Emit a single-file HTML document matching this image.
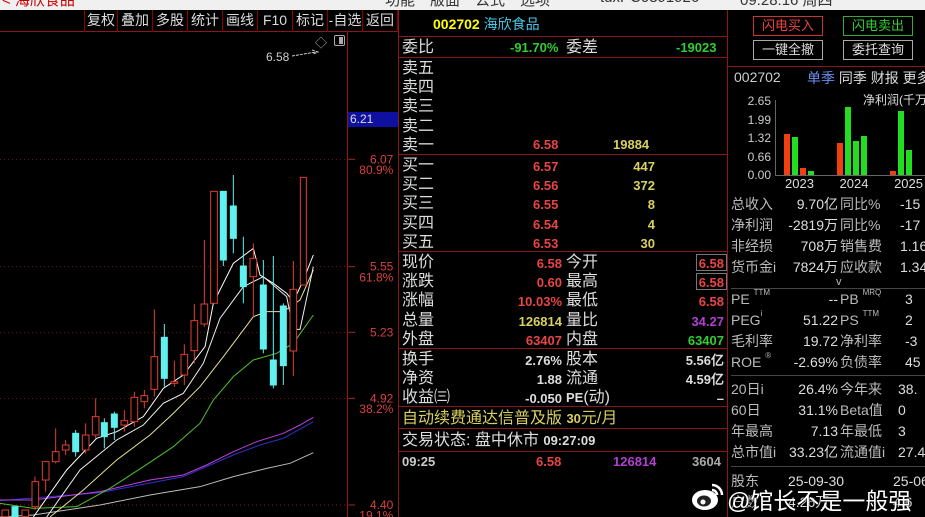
<!DOCTYPE html>
<html><head><meta charset="utf-8"><style>
*{margin:0;padding:0;box-sizing:border-box}
body{width:925px;height:517px;background:#000;overflow:hidden;position:relative;font-family:"Liberation Sans","Noto Sans CJK SC",sans-serif;color:#ddd}
.a{position:absolute;white-space:nowrap}
.top{position:absolute;left:0;top:0;width:925px;height:10px;background:#f0f0f0;overflow:hidden}
.top span{position:absolute;top:-11px;font-size:15px;color:#333}
.tb{position:absolute;top:10px;height:22px;font-size:14px;color:#ddd;line-height:21px;border-right:1px solid #800;text-align:center}
.m{font-size:16px;line-height:19px;color:#ddd}
.r{color:#e84545}.y{color:#d8d060}.g{color:#3c3}.p{color:#b040d0}
.num{font-family:"Liberation Sans",sans-serif;font-weight:bold;font-size:13px}
.hl{position:absolute;height:1px;background:#8a1818}
.rp{font-size:14px;color:#bbb;line-height:21px}
.sp{font-size:8px;vertical-align:top;line-height:0;position:relative;top:4px}
.btn{position:absolute;width:70px;height:20px;border:1px solid #aaa;font-size:13px;text-align:center;line-height:18px}
</style></head><body>
<div class="top"><span style="left:2px;color:#c00">&lt; 海欣食品</span><span style="left:385px">功能　版面　公式　选项</span><span style="left:600px">tdxPC0891926</span><span style="left:740px">09:28:16 周四</span></div>
<div style="position:absolute;left:0;top:31px;width:398px;height:1px;background:#8a1818"></div>
<div class="tb" style="left:84px;width:34px;border-left:1px solid #800">复权</div>
<div class="tb" style="left:118px;width:35px">叠加</div>
<div class="tb" style="left:153px;width:35px">多股</div>
<div class="tb" style="left:188px;width:35px">统计</div>
<div class="tb" style="left:223px;width:35px">画线</div>
<div class="tb" style="left:258px;width:35px">F10</div>
<div class="tb" style="left:293px;width:35px">标记</div>
<div class="tb" style="left:328px;width:35px">-自选</div>
<div class="tb" style="left:363px;width:35px">返回</div>
<div style="position:absolute;left:347px;top:32px;width:1px;height:485px;background:#8a1818"></div>
<div style="position:absolute;left:398px;top:10px;width:1px;height:507px;background:#8a1818"></div>
<div style="position:absolute;left:727px;top:10px;width:1px;height:507px;background:#8a1818"></div>
<div class="a" style="left:315px;top:34px;font-size:12px;color:#aaa">◇</div>
<div class="a" style="left:334px;top:35px;width:11px;height:11px;border:1px solid #aaa;border-radius:2px"><div style="position:absolute;right:1px;top:1px;width:4px;height:7px;background:#aaa"></div></div>
<div class="a" style="left:266px;top:50px;font-size:12px;color:#ccc">6.58</div>
<svg class="a" style="left:292px;top:48px" width="30" height="12"><path d="M0 8 L24 4 M20 2 L26 4 L21 6" stroke="#ccc" fill="none" stroke-dasharray="3 1"/></svg>
<div class="a" style="left:348px;top:112px;width:50px;height:15px;background:#1010a0;color:#ddd;font-size:12px;line-height:15px;padding-left:2px">6.21</div>
<svg class="a" style="left:0;top:130px" width="400" height="387" viewBox="0 0 1200 1161">
<g stroke="#a22" stroke-width="2" stroke-dasharray="3 9">
<line x1="0" y1="88" x2="1040" y2="88"/><line x1="0" y1="410" x2="1040" y2="410"/><line x1="0" y1="607" x2="1040" y2="607"/><line x1="0" y1="805" x2="1040" y2="805"/><line x1="0" y1="1125" x2="1040" y2="1125"/></g>
<g stroke="#a22" stroke-width="3"><line x1="1045" y1="88" x2="1065" y2="88"/><line x1="1045" y1="410" x2="1065" y2="410"/><line x1="1045" y1="607" x2="1065" y2="607"/><line x1="1045" y1="805" x2="1065" y2="805"/><line x1="1045" y1="1125" x2="1065" y2="1125"/></g>
<g font-size="36" fill="#d84040" text-anchor="end" font-family="Liberation Sans">
<text x="1180" y="100">6.07</text><text x="1180" y="132">80.9%</text>
<text x="1180" y="422">5.55</text><text x="1180" y="454">61.8%</text>
<text x="1180" y="619">5.23</text>
<text x="1180" y="817">4.92</text><text x="1180" y="849">38.2%</text>
<text x="1180" y="1137">4.40</text><text x="1180" y="1169">19.1%</text></g>
<g fill="none" stroke-width="3">
<polyline stroke="#bbb" points="0,1161 100,1155 300,1125 450,1095 600,1070 700,1040 800,1015 870,1000 940,968"/>
<polyline stroke="#3030d0" points="0,1112 300,1088 550,1040 700,975 780,945 850,925 940,875"/>
<polyline stroke="#c040e0" points="0,1110 100,1110 300,1085 450,1050 550,1035 620,1005 700,965 770,935 850,910 900,885 940,862"/>
<polyline stroke="#50c030" points="0,1120 100,1135 230,1130 330,1075 430,1010 520,950 600,880 640,810 700,740 760,690 830,670 880,640 940,555"/>
<polyline stroke="#e8e090" points="150,1161 250,1080 350,990 450,915 520,850 600,770 670,680 760,560 800,545 850,545 900,510 940,420"/>
<polyline stroke="#eee" points="140,1161 240,1020 350,930 430,885 490,820 550,790 610,700 660,565 730,470 790,440 860,500 880,598 900,598 940,410"/>
<polyline stroke="#fff" points="100,1161 200,1020 290,925 350,905 430,860 490,775 550,735 615,650 640,520 700,400 760,355 780,435 820,460 860,490 880,515 910,450 940,375"/>
</g>
<g stroke-width="3">
<g stroke="#e04030" fill="#000">
<rect x="6" y="1140" width="20" height="20"/><rect x="66" y="1140" width="20" height="20"/>
<line x1="105" y1="1040" x2="105" y2="1140"/><rect x="96" y="1055" width="20" height="75"/>
<line x1="137" y1="995" x2="137" y2="1085"/><rect x="127" y="995" width="20" height="55"/>
<line x1="167" y1="895" x2="167" y2="1000"/><rect x="157" y="965" width="20" height="30"/>
<line x1="197" y1="930" x2="197" y2="975"/><rect x="187" y="945" width="20" height="15"/>
<line x1="257" y1="880" x2="257" y2="970"/><rect x="247" y="915" width="20" height="45"/>
<line x1="287" y1="805" x2="287" y2="925"/><rect x="277" y="860" width="20" height="55"/>
<line x1="373" y1="840" x2="373" y2="905"/><rect x="363" y="872" width="20" height="13"/>
<line x1="403" y1="785" x2="403" y2="890"/><rect x="393" y="802" width="20" height="73"/>
<line x1="433" y1="780" x2="433" y2="835"/><rect x="423" y="797" width="20" height="18"/>
<line x1="463" y1="538" x2="463" y2="800"/><rect x="453" y="680" width="20" height="98"/>
<line x1="523" y1="692" x2="523" y2="770"/><rect x="513" y="755" width="20" height="5"/>
<line x1="553" y1="643" x2="553" y2="765"/><rect x="543" y="673" width="20" height="62"/>
<line x1="583" y1="522" x2="583" y2="700"/><rect x="573" y="572" width="20" height="90"/>
<line x1="613" y1="330" x2="613" y2="590"/><rect x="603" y="522" width="20" height="60"/>
<rect x="632" y="184" width="20" height="336"/>
<line x1="760" y1="340" x2="760" y2="560"/><rect x="750" y="385" width="20" height="55"/>
<line x1="880" y1="393" x2="880" y2="738"/><rect x="870" y="478" width="20" height="185"/>
<rect x="901" y="142" width="18" height="323"/>
</g>
<g stroke="#60f0f0" fill="#60f0f0">
<rect x="36" y="1130" width="18" height="30"/>
<line x1="227" y1="900" x2="227" y2="980"/><rect x="218" y="910" width="18" height="55"/>
<line x1="313" y1="865" x2="313" y2="955"/><rect x="304" y="878" width="18" height="42"/>
<line x1="343" y1="845" x2="343" y2="930"/><rect x="334" y="852" width="18" height="40"/>
<line x1="493" y1="582" x2="493" y2="770"/><rect x="484" y="622" width="18" height="123"/>
<line x1="670" y1="184" x2="670" y2="408"/><rect x="661" y="184" width="18" height="206"/>
<line x1="700" y1="135" x2="700" y2="370"/><rect x="691" y="228" width="18" height="97"/>
<line x1="730" y1="320" x2="730" y2="520"/><rect x="721" y="408" width="18" height="62"/>
<line x1="790" y1="390" x2="790" y2="670"/><rect x="781" y="465" width="18" height="192"/>
<line x1="820" y1="378" x2="820" y2="775"/><rect x="811" y="690" width="18" height="75"/>
<line x1="850" y1="520" x2="850" y2="765"/><rect x="841" y="528" width="18" height="179"/>
</g></g>
</svg>

<!-- middle panel -->
<div class="a num" style="left:433px;top:14px;color:#ff0;font-size:14px">002702 <span style="color:#4ac8e8;font-weight:normal;font-family:'Liberation Sans','Noto Sans CJK SC',sans-serif">海欣食品</span></div>
<div class="hl" style="left:398px;top:36px;width:329px"></div>
<div class="a m" style="left:402px;top:38px">委比</div><div class="a num g" style="left:510px;top:40px">-91.70%</div><div class="a m" style="left:566px;top:38px">委差</div><div class="a num g" style="left:676px;top:40px">-19023</div>
<div class="hl" style="left:398px;top:57px;width:329px"></div>
<div class="a m" style="left:402px;top:59px;line-height:19.2px">卖五<br>卖四<br>卖三<br>卖二<br>卖一</div>
<div class="a num r" style="left:533px;top:137px">6.58</div><div class="a num y" style="left:613px;top:137px">19884</div>
<div class="hl" style="left:398px;top:154px;width:329px"></div>
<div class="a m" style="left:402px;top:156px;line-height:19.2px">买一<br>买二<br>买三<br>买四<br>买五</div>
<div class="a num r" style="left:533px;top:157px;line-height:19.2px">6.57<br>6.56<br>6.55<br>6.54<br>6.53</div>
<div class="a num y" style="left:600px;top:157px;line-height:19.2px;width:55px;text-align:right">447<br>372<br>8<br>4<br>30</div>
<div class="hl" style="left:398px;top:251px;width:329px"></div>
<div class="a m" style="left:402px;top:253px;line-height:19.2px">现价<br>涨跌<br>涨幅<br>总量<br>外盘</div>
<div class="a num" style="left:480px;top:254px;line-height:19.2px;width:82px;text-align:right"><span class="r">6.58</span><br><span class="r">0.60</span><br><span class="r">10.03%</span><br><span class="y">126814</span><br><span class="r">63407</span></div>
<div class="a m" style="left:566px;top:253px;line-height:19.2px">今开<br>最高<br>最低<br>量比<br>内盘</div>
<div class="a num" style="left:640px;top:254px;line-height:19.2px;width:84px;text-align:right"><span class="r">6.58</span><br><span class="r">6.58</span><br><span class="r">6.58</span><br><span class="p">34.27</span><br><span class="g">63407</span></div>
<div class="a" style="left:696px;top:254px;width:31px;height:17px;border:1px solid #777"></div>
<div class="a" style="left:696px;top:273px;width:31px;height:17px;border:1px solid #777"></div>
<div class="hl" style="left:398px;top:348px;width:329px"></div>
<div class="a m" style="left:402px;top:350px;line-height:19.2px">换手<br>净资<br>收益㈢</div>
<div class="a num" style="left:480px;top:351px;line-height:19.2px;width:82px;text-align:right">2.76%<br>1.88<br>-0.050</div>
<div class="a m" style="left:566px;top:350px;line-height:19.2px">股本<br>流通<br><span class="num" style="font-size:13px">PE</span>(动)</div>
<div class="a num" style="left:640px;top:351px;line-height:19.2px;width:84px;text-align:right">5.56亿<br>4.59亿<br>–</div>
<div class="hl" style="left:398px;top:406px;width:329px"></div>
<div class="a m y" style="left:402px;top:409px">自动续费通达信普及版 <span class="num">30</span>元/月</div>
<div class="hl" style="left:398px;top:428px;width:329px"></div>
<div class="a m" style="left:402px;top:431px">交易状态: 盘中休市 <span class="num">09:27:09</span></div>
<div class="hl" style="left:398px;top:451px;width:329px"></div>
<div class="a num" style="left:402px;top:454px;color:#ccc">09:25</div>
<div class="a num r" style="left:536px;top:454px">6.58</div>
<div class="a num p" style="left:613px;top:454px">126814</div>
<div class="a num" style="left:692px;top:454px;color:#aaa">3604</div>

<!-- right panel -->
<div class="btn" style="left:753px;top:16px;border-color:#c33;color:#e44">闪电买入</div>
<div class="btn" style="left:843px;top:16px;border-color:#3a3;color:#3c3">闪电卖出</div>
<div class="btn" style="left:753px;top:40px;color:#ddd">一键全撤</div>
<div class="btn" style="left:843px;top:40px;color:#ddd">委托查询</div>
<div class="hl" style="left:728px;top:66px;width:197px"></div>
<div class="a" style="left:734px;top:69px;font-size:14px;color:#ccc">002702</div>
<div class="a" style="left:807px;top:68px;font-size:14px;color:#6a8ff0">单季 <span style="color:#ddd">同季 财报 更多</span></div>
<div class="a" style="left:863px;top:91px;font-size:12px;color:#ddd">净利润(千万)</div>
<div class="a" style="left:745px;top:92px;font-size:12px;color:#ccc;line-height:18.5px;text-align:right;width:26px">2.65<br>1.99<br>1.32<br>0.66<br>0.00</div>
<div class="a" style="left:775px;top:100px;width:1px;height:75px;background:#666"></div>
<div class="a" style="left:775px;top:175px;width:150px;height:1px;background:#666"></div>
<div class="a" style="left:784px;top:134px;width:6px;height:41px;background:#f04010"></div>
<div class="a" style="left:792px;top:137px;width:6px;height:38px;background:#2d2"></div>
<div class="a" style="left:800px;top:168px;width:6px;height:7px;background:#f04010"></div>
<div class="a" style="left:808px;top:171px;width:6px;height:4px;background:#2d2"></div>
<div class="a" style="left:837px;top:143px;width:6px;height:32px;background:#f04010"></div>
<div class="a" style="left:845px;top:107px;width:6px;height:68px;background:#2d2"></div>
<div class="a" style="left:853px;top:141px;width:6px;height:34px;background:#2d2"></div>
<div class="a" style="left:861px;top:136px;width:6px;height:39px;background:#2d2"></div>
<div class="a" style="left:890px;top:171px;width:6px;height:4px;background:#f04010"></div>
<div class="a" style="left:898px;top:111px;width:6px;height:64px;background:#2d2"></div>
<div class="a" style="left:906px;top:150px;width:6px;height:25px;background:#2d2"></div>
<div class="a" style="left:785px;top:176px;font-size:13px;color:#ddd;word-spacing:22px">2023 2024 2025</div>
<div class="a rp" style="left:731px;top:194px">总收入<br>净利润<br>非经损<br>货币金i</div>
<div class="a rp" style="left:780px;top:194px;width:58px;text-align:right;color:#ddd">9.70亿<br>-2819万<br>708万<br>7824万</div>
<div class="a rp" style="left:840px;top:194px">同比%<br>同比%<br>销售费<br>应收款</div>
<div class="a rp" style="left:900px;top:194px;color:#ddd">-15<br>-17<br>1.16<br>1.34</div>
<div class="a" style="left:836px;top:276px;font-size:11px;color:#bbb">v</div>
<div class="hl" style="left:731px;top:288px;width:194px;background:#444"></div>
<div class="a rp" style="left:731px;top:289px">PE <span class="sp">TTM</span><br>PEG<span class="sp">i</span><br>毛利率<br>ROE <span class="sp">®</span></div>
<div class="a rp" style="left:780px;top:289px;width:58px;text-align:right;color:#ddd">--<br>51.22<br>19.72<br>-2.69%</div>
<div class="a rp" style="left:840px;top:289px">PB <span class="sp">MRQ</span><br>PS <span class="sp">TTM</span><br>净利率<br>负债率</div>
<div class="a rp" style="left:905px;top:289px;color:#ddd">3<br>2<br>-3<br>45</div>
<div class="hl" style="left:731px;top:375px;width:194px;background:#444"></div>
<div class="a rp" style="left:731px;top:379px">20日i<br>60日<br>年最高<br>总市值i</div>
<div class="a rp" style="left:780px;top:379px;width:58px;text-align:right;color:#ddd">26.4%<br>31.1%<br>7.13<br>33.23亿</div>
<div class="a rp" style="left:840px;top:379px">今年来<br>Beta值<br>年最低<br>流通值i</div>
<div class="a rp" style="left:898px;top:379px;color:#ddd">38.<br>0<br>3<br>27.4</div>
<div class="hl" style="left:731px;top:466px;width:194px;background:#444"></div>
<div class="a rp" style="left:731px;top:471px">股东<br>户数</div>
<div class="a rp" style="left:788px;top:471px;color:#ddd">25-09-30<br>4.26万</div>
<div class="a rp" style="left:893px;top:471px;color:#ddd">25-06<br>4.6</div>
<!-- watermark -->
<svg class="a" style="left:690px;top:480px" width="36" height="32" viewBox="0 0 36 32"><ellipse cx="15" cy="20" rx="13" ry="10" fill="#fff"/><ellipse cx="14" cy="21" rx="7" ry="5.5" fill="#222"/><circle cx="13" cy="22" r="2.5" fill="#fff"/><path d="M22 5 A10 10 0 0 1 32 15" stroke="#fff" stroke-width="2.5" fill="none"/><path d="M22 10 A5 5 0 0 1 27 15" stroke="#fff" stroke-width="2.5" fill="none"/></svg>
<div class="a" style="left:727px;top:482px;font-size:23px;color:#fff;text-shadow:0 0 2px #000">@馆长不是一般强</div>
</body></html>
